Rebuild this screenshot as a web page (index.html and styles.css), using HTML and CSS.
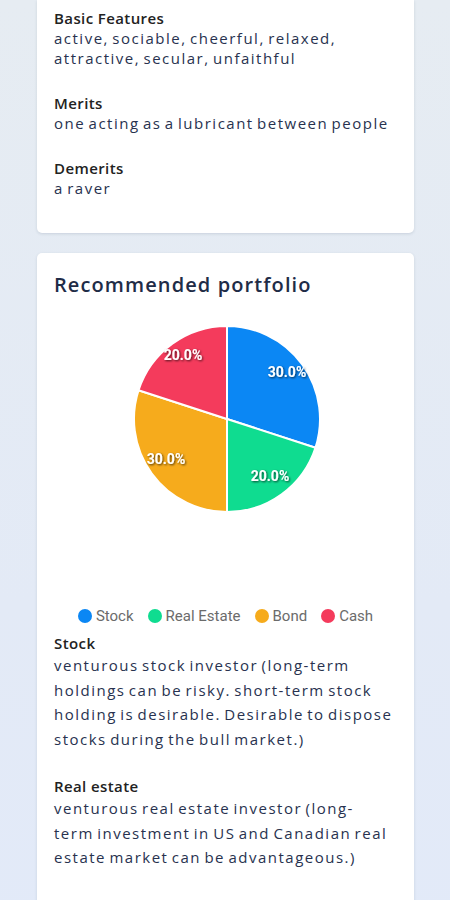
FILE: index.html
```html
<!DOCTYPE html>
<html lang="en">
<head>
  <meta charset="UTF-8" />
  <meta name="viewport" content="width=device-width, initial-scale=1.0">
  <title>Personality result</title>
  <link rel="stylesheet" href="styles.css">
</head>
<body>
  <div class="page">
    <div class="card card-top">
      <div class="item">
        <div class="item-title">Basic Features</div>
        <div class="item-text">active, sociable, cheerful, relaxed, attractive, secular, unfaithful</div>
      </div>
      <div class="item">
        <div class="item-title">Merits</div>
        <div class="item-text">one acting as a lubricant between people</div>
      </div>
      <div class="item">
        <div class="item-title">Demerits</div>
        <div class="item-text">a raver</div>
      </div>
    </div>

    <div class="card">
      <h2 class="card-title">Recommended portfolio</h2>

      <svg class="chart" width="343" height="296" viewBox="0 0 343 296">
        <defs>
          <filter id="shadow" x="-20%" y="-50%" width="140%" height="200%">
            <feDropShadow dx="1" dy="1" stdDeviation="1" flood-color="#000" flood-opacity="0.7"/>
          </filter>
        </defs>
        <g stroke="#fff" stroke-width="2" stroke-linejoin="round">
          <path fill="#0b87f4" d="M173,109 L173,16 A93,93 0 0 1 261.45,137.74 Z"/>
          <path fill="#0fdc90" d="M173,109 L261.45,137.74 A93,93 0 0 1 173,202 Z"/>
          <path fill="#f6ab1c" d="M173,109 L173,202 A93,93 0 0 1 84.55,80.26 Z"/>
          <path fill="#f43b5c" d="M173,109 L84.55,80.26 A93,93 0 0 1 173,16 Z"/>
        </g>
        <g class="slice-label" filter="url(#shadow)">
          <text x="233" y="62">30.0%</text>
          <text x="216" y="166">20.0%</text>
          <text x="112" y="149">30.0%</text>
          <text x="129" y="45">20.0%</text>
        </g>
      </svg>

      <div class="legend">
        <span class="legend-item"><i class="dot dot-stock"></i>Stock</span>
        <span class="legend-item"><i class="dot dot-estate"></i>Real Estate</span>
        <span class="legend-item"><i class="dot dot-bond"></i>Bond</span>
        <span class="legend-item"><i class="dot dot-cash"></i>Cash</span>
      </div>

      <div class="item">
        <div class="item-title">Stock</div>
        <div class="item-text tall">venturous stock investor (long-term holdings can be risky. short-term stock holding is desirable. Desirable to dispose stocks during the bull market.)</div>
      </div>
      <div class="item">
        <div class="item-title">Real estate</div>
        <div class="item-text tall">venturous real estate investor (long-term investment in US and Canadian real estate market can be advantageous.)</div>
      </div>
      <div class="item">
        <div class="item-title">Bond</div>
        <div class="item-text tall">stable bond investor</div>
      </div>
    </div>
  </div>
</body>
</html>
```

FILE: styles.css
```css
html, body {
  margin: 0;
  padding: 0;
}
body {
  font-family: "Open Sans", Lato, sans-serif;
  background: linear-gradient(180deg, #e6ecf2 0%, #e3eaf6 60%, #e2eaf9 100%);
  min-height: 900px;
}
.page {
  display: flex;
  flex-direction: column;
  gap: 20px;
  padding: 0 36px 40px 37px;
}
.card {
  background: #fff;
  border-radius: 5px;
  box-shadow: 0 1px 3px rgba(40, 60, 90, 0.15);
  padding: 18px 21px 30px 17px;
}
.card-top {
  border-radius: 0 0 5px 5px;
  padding-top: 8px;
  padding-bottom: 35px;
}
.item + .item {
  margin-top: 25px;
}
.item-title {
  font-size: 15px;
  line-height: 20px;
  font-weight: 600;
  color: #222;
  letter-spacing: 0.4px;
}
.item-text {
  font-size: 15px;
  line-height: 20px;
  color: #28324f;
  letter-spacing: 1.5px;
  word-spacing: -2px;
}
.item-text.tall {
  line-height: 24.5px;
}
.card-title {
  margin: 0;
  font-size: 20px;
  line-height: 28px;
  font-weight: 600;
  color: #1f2c47;
  letter-spacing: 1.1px;
}
.chart {
  display: block;
  margin-top: 11px;
}
.slice-label text {
  font-family: Roboto, sans-serif;
  font-size: 14px;
  font-weight: 700;
  fill: #fff;
  text-anchor: middle;
  dominant-baseline: central;
}
.legend {
  display: flex;
  justify-content: center;
  gap: 14px;
  height: 20px;
  align-items: center;
  margin: 0 -4px 7px 0;
  font-family: Roboto, sans-serif;
  font-size: 15px;
  color: #6b6b6b;
}
.legend-item {
  display: flex;
  align-items: center;
  gap: 4px;
}
.dot {
  width: 14px;
  height: 14px;
  border-radius: 50%;
}
.dot-stock { background: #0b87f4; }
.dot-estate { background: #0fdc90; }
.dot-bond { background: #f6ab1c; }
.dot-cash { background: #f43b5c; }
```
